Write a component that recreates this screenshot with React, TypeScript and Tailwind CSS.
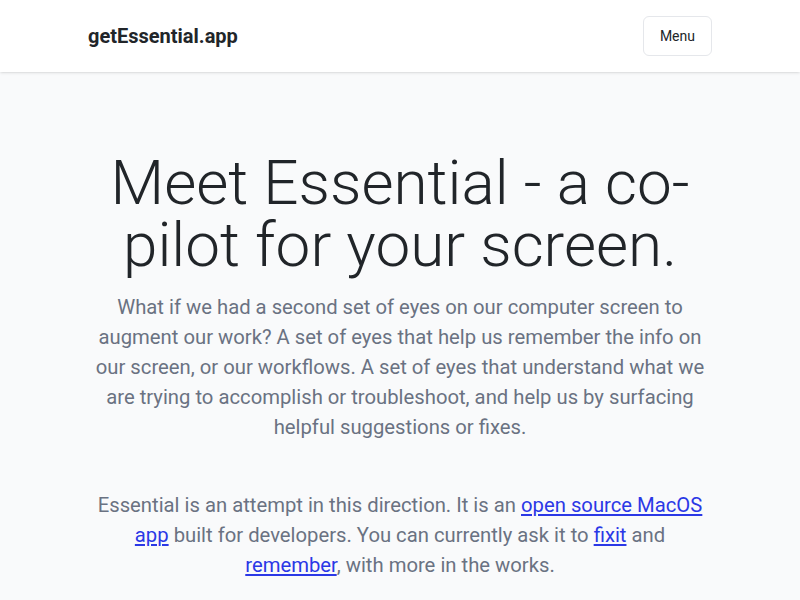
export default function App() {
  return (
    <div className="min-h-screen bg-gray-50 font-['Roboto',sans-serif]">
      {/* header */}
      <header className="bg-white shadow h-[72px]">
        <div className="max-w-2xl mx-auto px-6 h-full flex items-center justify-between">
          <span className="text-xl font-bold text-[#212529]">getEssential.app</span>
          <button className="h-10 px-4 rounded-md border border-gray-200 bg-white text-sm text-[#212529]">
            Menu
          </button>
        </div>
      </header>

      {/* hero */}
      <main className="max-w-2xl mx-auto px-[30px] pt-20 text-center">
        <h1 className="text-[62px] leading-[62px] font-light text-[#212529]">
          Meet Essential - a co-pilot for your screen.
        </h1>
        <p className="mt-4 text-[20.25px] leading-[30px] text-gray-500">
          What if we had a second set of eyes on our computer screen to augment
          our work? A set of eyes that help us remember the info on our screen,
          or our workflows. A set of eyes that understand what we are trying to
          accomplish or troubleshoot, and help us by surfacing helpful
          suggestions or fixes.
        </p>
        <p className="mt-12 text-[20.25px] leading-[30px] text-gray-500">
          Essential is an attempt in this direction. It is an{" "}
          <a href="#" className="text-[#2b38e6] underline">
            open source MacOS app
          </a>{" "}
          built for developers. You can currently ask it to{" "}
          <a href="#" className="text-[#2b38e6] underline">
            fixit
          </a>{" "}
          and{" "}
          <a href="#" className="text-[#2b38e6] underline">
            remember
          </a>
          , with more in the works.
        </p>
      </main>
    </div>
  );
}
